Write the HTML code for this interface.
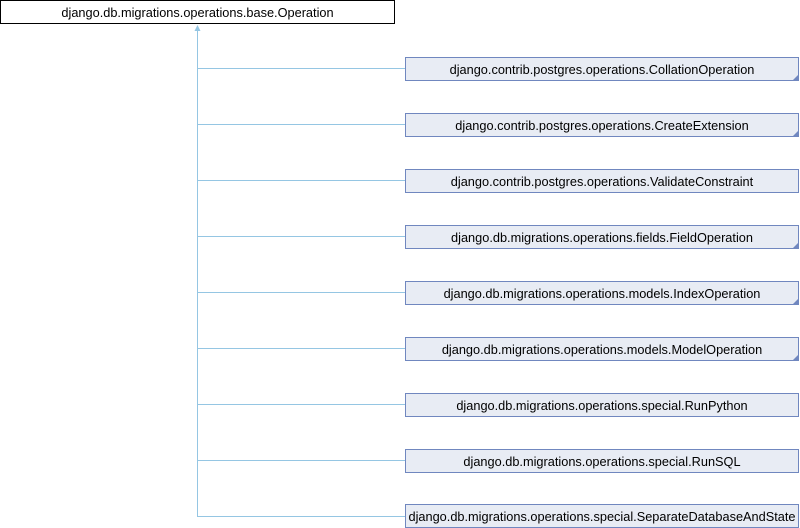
<!DOCTYPE html>
<html><head><style>body{margin:0;background:#fff}svg{display:block}text{font-family:"Liberation Sans",Arial,sans-serif;font-size:12.75px;fill:#000}</style></head><body>
<svg width="800" height="528" xmlns="http://www.w3.org/2000/svg" shape-rendering="crispEdges">
<rect x="0.5" y="0.5" width="394" height="23" fill="#fff" stroke="#000"/>
<text x="197.5" y="17" text-anchor="middle">django.db.migrations.operations.base.Operation</text>
<g fill="#95c6e3">
<rect x="197" y="30" width="1" height="487"/>
<rect x="198" y="68" width="207" height="1"/>
<rect x="198" y="124" width="207" height="1"/>
<rect x="198" y="180" width="207" height="1"/>
<rect x="198" y="236" width="207" height="1"/>
<rect x="198" y="292" width="207" height="1"/>
<rect x="198" y="348" width="207" height="1"/>
<rect x="198" y="404" width="207" height="1"/>
<rect x="198" y="460" width="207" height="1"/>
<rect x="198" y="516" width="207" height="1"/>
</g>
<polygon points="197.5,25 194.5,31 200.5,31" fill="#95c6e3" shape-rendering="auto"/>
<g fill="#e8ecf4" stroke="#7087bf">
<rect x="405.5" y="57.5" width="393" height="23"/>
<rect x="405.5" y="113.5" width="393" height="23"/>
<rect x="405.5" y="169.5" width="393" height="23"/>
<rect x="405.5" y="225.5" width="393" height="23"/>
<rect x="405.5" y="281.5" width="393" height="23"/>
<rect x="405.5" y="337.5" width="393" height="23"/>
<rect x="405.5" y="393.5" width="393" height="23"/>
<rect x="405.5" y="449.5" width="393" height="23"/>
<rect x="405.5" y="504.5" width="393" height="23"/>
</g>
<g fill="#7087bf" shape-rendering="auto">
<polygon points="799,74 799,81 792,81"/>
<polygon points="799,130 799,137 792,137"/>
<polygon points="799,242 799,249 792,249"/>
<polygon points="799,298 799,305 792,305"/>
<polygon points="799,354 799,361 792,361"/>
</g>
<g text-anchor="middle">
<text x="602" y="74">django.contrib.postgres.operations.CollationOperation</text>
<text x="602" y="130">django.contrib.postgres.operations.CreateExtension</text>
<text x="602" y="186">django.contrib.postgres.operations.ValidateConstraint</text>
<text x="602" y="242">django.db.migrations.operations.fields.FieldOperation</text>
<text x="602" y="298">django.db.migrations.operations.models.IndexOperation</text>
<text x="602" y="354">django.db.migrations.operations.models.ModelOperation</text>
<text x="602" y="410">django.db.migrations.operations.special.RunPython</text>
<text x="602" y="466">django.db.migrations.operations.special.RunSQL</text>
<text x="602" y="521">django.db.migrations.operations.special.SeparateDatabaseAndState</text>
</g>
</svg>
</body></html>
